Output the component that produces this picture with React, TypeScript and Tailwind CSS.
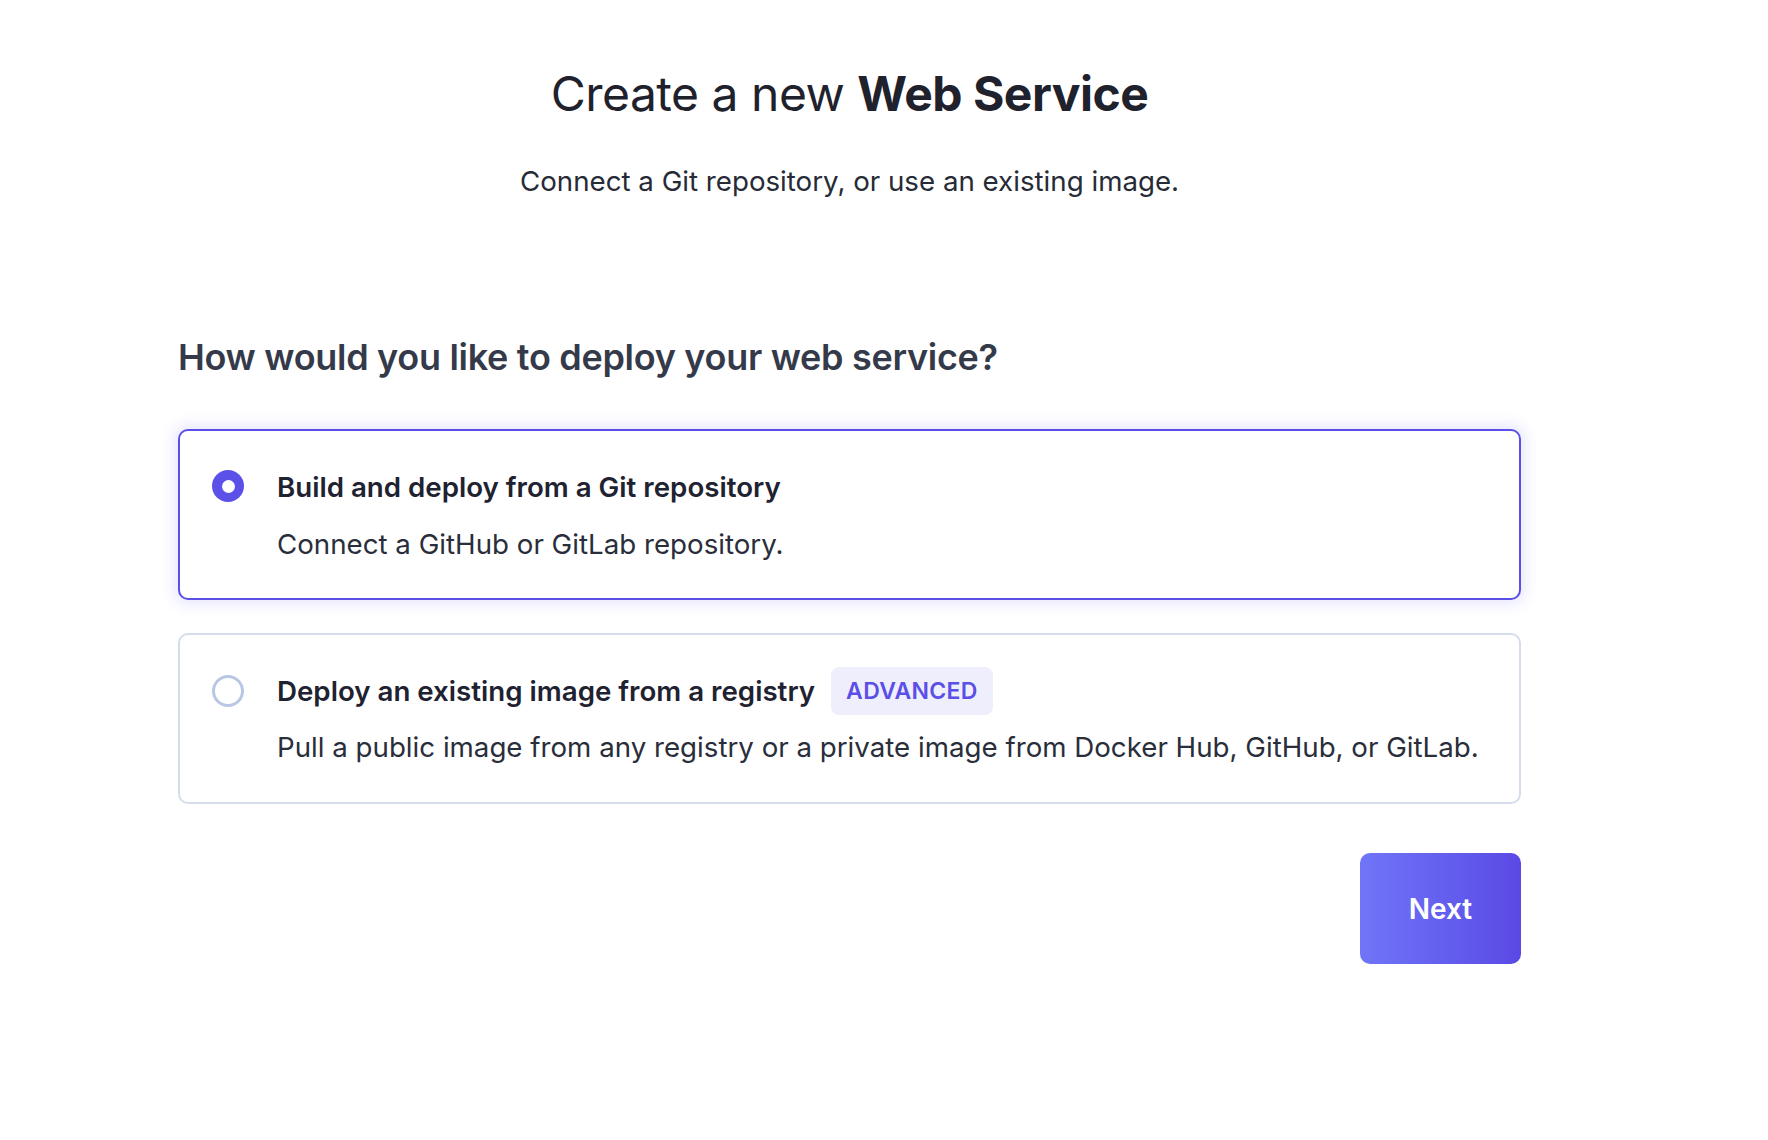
import React from "react";

export default function App() {
  return (
    <div className="min-h-[1140px] w-full bg-white font-['Inter','Noto_Sans',sans-serif]">
      <div className="w-[1699px] pt-[64px]">
        <div className="flex flex-col items-center">
          <h1 className="text-[48px] leading-[60px] font-normal tracking-[-0.5px] text-[#1f222c]">
            Create a new <span className="font-bold">Web Service</span>
          </h1>
          <p className="mt-[39px] text-[27.7px] leading-[36px] text-[#272b36]">
            Connect a Git repository, or use an existing image.
          </p>
        </div>

        <div className="mx-auto mt-[136px] w-[1343px]">
          <h2 className="text-[36px] leading-[44px] font-semibold tracking-[-0.3px] text-[#353a4a]">
            How would you like to deploy your web service?
          </h2>

          <div className="mt-[50px] flex flex-col gap-[33px]">
            <label className="flex h-[171px] items-start rounded-[10px] border-2 border-[#5b4fe6] bg-white px-[32px] pt-[38px] shadow-[0_0_14px_4px_rgba(108,99,255,0.16)]">
              <span className="mt-[1px] flex h-[32px] w-[32px] shrink-0 items-center justify-center rounded-full bg-[#5b51e8]">
                <span className="h-[13px] w-[13px] rounded-full bg-white" />
              </span>
              <span className="ml-[33px] flex flex-col">
                <span className="text-[27.7px] leading-[36px] font-semibold text-[#1f2230]">
                  Build and deploy from a Git repository
                </span>
                <span className="mt-[21px] text-[27.7px] leading-[36px] text-[#2a2e3b]">
                  Connect a GitHub or GitLab repository.
                </span>
              </span>
            </label>

            <label className="flex h-[171px] items-start rounded-[10px] border-2 border-[#d5ddec] bg-white px-[32px] pt-[32px]">
              <span className="mt-[8px] h-[32px] w-[32px] shrink-0 rounded-full border-[3px] border-[#b9c7e4] bg-white" />
              <span className="ml-[33px] flex flex-col">
                <span className="flex items-center">
                  <span className="text-[27.7px] leading-[36px] font-semibold text-[#1f2230]">
                    Deploy an existing image from a registry
                  </span>
                  <span className="ml-[16px] flex h-[48px] items-center rounded-[8px] bg-[#efeefd] px-[15px] text-[23px] font-semibold tracking-[0.3px] text-[#5b4fe6]">
                    ADVANCED
                  </span>
                </span>
                <span className="mt-[14px] whitespace-nowrap text-[27.7px] leading-[36px] text-[#2a2e3b]">
                  Pull a public image from any registry or a private image from Docker Hub, GitHub, or GitLab.
                </span>
              </span>
            </label>
          </div>

          <div className="mt-[49px] flex justify-end">
            <button className="flex h-[111px] w-[161px] items-center justify-center rounded-[10px] bg-gradient-to-r from-[#7075f8] to-[#5a49e5] text-[28px] font-semibold text-white">
              Next
            </button>
          </div>
        </div>
      </div>
    </div>
  );
}
